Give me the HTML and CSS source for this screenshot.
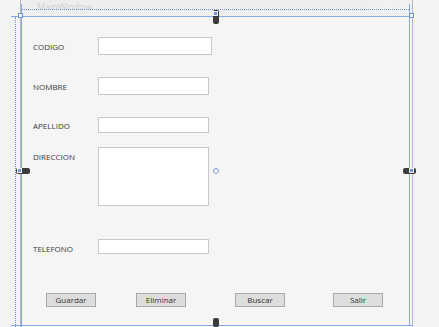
FILE: index.html
```html
<!DOCTYPE html>
<html>
<head>
<meta charset="utf-8">
<link rel="stylesheet" href="styles.css">
</head>
<body>
<div class="stage">
  <div class="window">
    <div class="titlebar">
      <span class="title">MainWindow</span>
      <div class="caption-btns"><span></span><span></span><span></span></div>
    </div>
    <div class="content">
      <div class="row r1"><label class="lbl">CODIGO</label><div class="box w114 h18"></div></div>
      <div class="row r2"><label class="lbl">NOMBRE</label><div class="box h18"></div></div>
      <div class="row r3"><label class="lbl">APELLIDO</label><div class="box h16"></div></div>
      <div class="row r4 top"><label class="lbl lbl-top">DIRECCION</label><div class="box h59"></div></div>
      <div class="row r5"><label class="lbl lbl-low">TELEFONO</label><div class="box h15"></div></div>
      <div class="buttons">
        <button class="btn b1">Guardar</button>
        <button class="btn b2">Eliminar</button>
        <button class="btn b3">Buscar</button>
        <button class="btn b4">Salir</button>
      </div>
    </div>
  </div>

  <!-- designer adorners -->
  <div class="sel-top"></div>
  <div class="sel-bottom"></div>
  <div class="sel-left"></div>
  <div class="sel-right"></div>
  <div class="dot-v"></div>
  <div class="dot-h"></div>
  <div class="sq sq-tl"></div>
  <div class="sq sq-tr"></div>
  <div class="circle"></div>
  <div class="handle h-top"><i></i></div>
  <div class="handle h-bottom"></div>
  <div class="handle h-left"><i></i></div>
  <div class="handle h-right"><i></i></div>
</div>
</body>
</html>
```
FILE: styles.css
```css
html, body {
  margin: 0;
  padding: 0;
}
body {
  width: 439px;
  height: 327px;
  overflow: hidden;
  background: #f3f3f3;
  font-family: "Open Sans", "Noto Sans", sans-serif;
}
.stage {
  position: relative;
  width: 439px;
  height: 327px;
}
.window {
  margin-left: 20px;
  width: 391px;
  height: 327px;
  border-left: 1px solid #b9b9b9;
  border-right: 1px solid #b9b9b9;
  display: flex;
  flex-direction: column;
  background: #f5f5f5;
}
.titlebar {
  height: 16px;
  flex: none;
  background: #eeeeee;
  position: relative;
  display: flex;
  align-items: center;
}
.title {
  margin-left: 16px;
  margin-top: -3px;
  font-size: 9px;
  color: #cfcfcf;
}
.caption-btns {
  margin-left: auto;
  margin-right: 2px;
  display: flex;
  gap: 1px;
  align-self: flex-start;
}
.caption-btns span {
  width: 13px;
  height: 15px;
  background: #f1f1f1;
}
.content {
  flex: 1;
  padding-left: 12px;
  padding-top: 1px;
  display: flex;
  flex-direction: column;
}
.row {
  display: flex;
  align-items: center;
}
.row.top { align-items: flex-start; }
.r1 { margin-top: 20px; }
.r2 { margin-top: 22px; }
.r3 { margin-top: 22px; }
.r4 { margin-top: 14px; }
.r5 { margin-top: 33px; }
.lbl {
  width: 65px;
  font-size: 8px;
  color: #3a3a3a;
  line-height: 11px;
}
.lbl-top { margin-top: 4px; }
.lbl-low { margin-top: 3px; }
.box {
  box-sizing: border-box;
  width: 111px;
  background: #ffffff;
  border: 1px solid #c8c8c8;
}
.w114 { width: 114px; }
.h18 { height: 18px; }
.h16 { height: 16px; }
.h15 { height: 15px; }
.h59 { height: 59px; }
.buttons {
  display: flex;
  margin-top: 39px;
}
.btn {
  box-sizing: border-box;
  width: 50px;
  height: 14px;
  padding: 0;
  margin: 0;
  background: #dddddd;
  border: 1px solid #a9a9a9;
  border-radius: 0;
  font-family: "Open Sans", "Noto Sans", sans-serif;
  font-size: 8px;
  line-height: 12px;
  color: #333333;
}
.b1 { margin-left: 13px; }
.b2 { margin-left: 40px; }
.b3 { margin-left: 49px; }
.b4 { margin-left: 48px; }

/* adorners */
.sel-top, .sel-bottom, .sel-left, .sel-right, .dot-v, .dot-h,
.sq, .circle, .handle {
  position: absolute;
}
.sel-top {
  left: 11px;
  top: 16px;
  width: 401px;
  height: 1px;
  background: #86a8e8;
}
.sel-bottom {
  left: 11px;
  top: 325px;
  width: 402px;
  height: 1px;
  background: #86a8e8;
}
.sel-left {
  left: 21px;
  top: 4px;
  width: 1px;
  height: 323px;
  background: #86a8e8;
}
.sel-right {
  left: 409px;
  top: 4px;
  width: 1px;
  height: 322px;
  background: #86a8e8;
}
.dot-v {
  left: 15px;
  top: 17px;
  width: 0;
  height: 310px;
  border-left: 1px dotted #6f93dc;
}
.dot-h {
  left: 22px;
  top: 9px;
  width: 387px;
  height: 0;
  border-top: 1px dotted #6f93dc;
}
.sq {
  width: 3px;
  height: 3px;
  border: 1px solid #6f93dc;
  background: #f5f5f5;
}
.sq-tl { left: 18px; top: 13px; }
.sq-tr { left: 409px; top: 13px; }
.circle {
  left: 213px;
  top: 168px;
  width: 4px;
  height: 4px;
  border: 1px solid #7a9fe6;
  border-radius: 50%;
}
.handle {
  background: #3c3c3c;
  border-radius: 2px;
}
.handle i {
  position: absolute;
  width: 3px;
  height: 3px;
  border: 1px solid #f0f0f0;
  background: #6f93dc;
}
.h-top {
  left: 213px;
  top: 10px;
  width: 6px;
  height: 14px;
}
.h-top i { left: 0; top: 1px; }
.h-bottom {
  left: 213px;
  top: 318px;
  width: 6px;
  height: 9px;
}
.h-left {
  left: 16px;
  top: 168px;
  width: 14px;
  height: 6px;
}
.h-left i { left: 1px; top: 0; }
.h-right {
  left: 403px;
  top: 168px;
  width: 13px;
  height: 6px;
}
.h-right i { left: 6px; top: 0; }
```
